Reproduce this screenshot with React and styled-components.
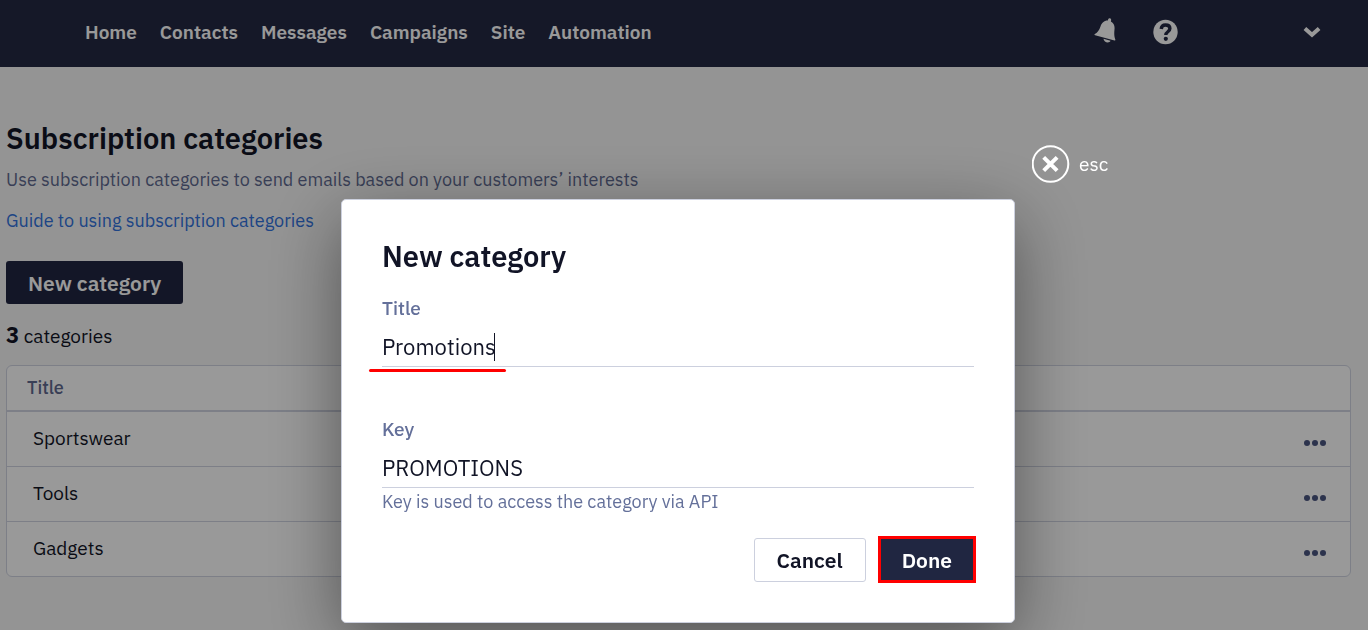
import React, { useState } from "react";
import styled, { createGlobalStyle, css } from "styled-components";

const rows = ["Sportswear", "Tools", "Gadgets"];
const links = ["Home", "Contacts", "Messages", "Campaigns", "Site", "Automation"];

export default function App() {
  const [title, setTitle] = useState("Promotions");
  const [key, setKey] = useState("PROMOTIONS");

  return (
    <>
      <GlobalStyle />
      <Header>
        <Nav>
          {links.map((link) => (
            <a href="#" key={link}>
              {link}
            </a>
          ))}
        </Nav>
        <Tools>
          <IconButton aria-label="Notifications">
            <svg width="26" height="28" viewBox="0 0 26 28" fill="currentColor">
              <path d="M15.200 1.200c.4-1.400 3.200-1.200 3 .9l-.3 1.300c3 1.600 4 4.400 3.600 7.900-.4 4.300-.4 7.100.8 10.200.3.800-.1 1.100-.8.900L2.100 17.200c-.8-.2-.9-.9-.2-1.300 2.800-1.600 4.300-4 5.600-7.500C8.800 5 11 2.500 14.800 2.600z" />
              <path d="M10.500 20.800l7 1.900c-.8 2.700-6.600 2.300-7-1.900z" />
            </svg>
          </IconButton>
          <IconButton aria-label="Help">
            <svg width="26" height="26" viewBox="0 0 26 26">
              <circle cx="12.500" cy="13" r="12.200" fill="currentColor" />
              <path
                d="M8.200 10c.2-2.700 1.900-4 4.300-4 2.700 0 4.400 1.300 4.400 3.600 0 3.300-4.100 3-4.100 6.400"
                fill="none"
                stroke="#232843"
                strokeWidth="3.400"
              />
              <circle cx="12.800" cy="19.800" r="2.100" fill="#232843" />
            </svg>
          </IconButton>
          <IconButton aria-label="Account" $account>
            <svg width="18" height="12" viewBox="0 0 18 12" fill="none" stroke="currentColor" strokeWidth="4">
              <path d="M1.900 2.400L9 8.800l7.100-6.400" />
            </svg>
          </IconButton>
        </Tools>
      </Header>

      <Main>
        <PageTitle>Subscription categories</PageTitle>
        <Intro>Use subscription categories to send emails based on your customers’ interests</Intro>
        <GuideLink href="#">Guide to using subscription categories</GuideLink>
        <Button $primary>New category</Button>
        <Count>
          <b>3</b> categories
        </Count>
        <TableCard>
          <Table>
            <thead>
              <tr>
                <th scope="col">Title</th>
                <td />
              </tr>
            </thead>
            <tbody>
              {rows.map((row) => (
                <tr key={row}>
                  <td>{row}</td>
                  <td>
                    <MoreButton aria-label={`Actions for ${row}`}>
                      <svg width="22" height="6" viewBox="0 0 22 6" fill="currentColor">
                        <circle cx="3" cy="3" r="3" />
                        <circle cx="11" cy="3" r="3" />
                        <circle cx="19" cy="3" r="3" />
                      </svg>
                    </MoreButton>
                  </td>
                </tr>
              ))}
            </tbody>
          </Table>
        </TableCard>
      </Main>

      <Overlay>
        <Dialog role="dialog" aria-modal="true" aria-labelledby="dialog-title">
          <CloseButton>
            <svg width="38" height="38" viewBox="0 0 38 38" fill="none" stroke="currentColor">
              <circle cx="18.500" cy="19" r="17.800" strokeWidth="2" />
              <path d="M11.700 12.300l13.400 13.400M25.100 12.300L11.700 25.700" strokeWidth="4" />
            </svg>
            esc
          </CloseButton>
          <DialogTitle id="dialog-title">New category</DialogTitle>
          <Field>
            <label htmlFor="title">Title</label>
            <InputWrap $marked>
              <input id="title" value={title} onChange={(e) => setTitle(e.target.value)} />
            </InputWrap>
          </Field>
          <Field>
            <label htmlFor="key">Key</label>
            <InputWrap>
              <input
                id="key"
                value={key}
                onChange={(e) => setKey(e.target.value)}
                aria-describedby="key-hint"
              />
            </InputWrap>
            <Hint id="key-hint">Key is used to access the category via API</Hint>
          </Field>
          <Actions>
            <Button>Cancel</Button>
            <Button $primary $marked>
              Done
            </Button>
          </Actions>
        </Dialog>
      </Overlay>
    </>
  );
}

const GlobalStyle = createGlobalStyle`
  * {
    box-sizing: border-box;
  }
  body {
    margin: 0;
    background-color: #f7f7f7;
    color: #111426;
    font-family: "IBM Plex Sans", Roboto, "Liberation Sans", sans-serif;
    font-size: 18px;
    line-height: 24px;
  }
  button,
  input {
    font: inherit;
    color: inherit;
  }
  a {
    text-decoration: none;
  }
`;

const Header = styled.header`
  display: flex;
  align-items: center;
  justify-content: space-between;
  height: 67px;
  padding: 0 47px 4px 85px;
  background-color: #232843;
  color: #ffffff;
`;

const Nav = styled.nav`
  display: flex;
  gap: 23px;
  a {
    color: inherit;
    font-size: 19px;
    font-weight: 600;
  }
`;

const Tools = styled.div`
  display: flex;
  align-items: center;
  gap: 34px;
`;

const IconButton = styled.button`
  display: flex;
  padding: 0;
  border: 0;
  background: none;
  ${({ $account }) =>
    $account &&
    css`
      margin-left: 90px;
    `}
`;

const Main = styled.main`
  display: flex;
  flex-direction: column;
  align-items: flex-start;
  padding: 53px 17px 24px 6px;
`;

const PageTitle = styled.h1`
  margin: 0;
  font-size: 29px;
  font-weight: 600;
  line-height: 36px;
`;

const Intro = styled.p`
  margin: 12px 0 17px;
  color: #5f6a90;
`;

const GuideLink = styled.a`
  margin-bottom: 28px;
  color: #3273de;
`;

const Button = styled.button`
  height: 44px;
  padding: 0 22px;
  border: 1px solid #ccd0de;
  border-radius: 3px;
  background-color: #ffffff;
  font-size: 21px;
  font-weight: 600;
  ${({ $primary }) =>
    $primary &&
    css`
      height: 43px;
      border: 0;
      background-color: #202641;
      color: #ffffff;
    `}
  ${({ $marked }) =>
    $marked &&
    css`
      border-radius: 0;
      outline: 3px solid #ff0000;
      outline-offset: -1px;
    `}
`;

const Count = styled.p`
  margin: 19px 0 17px;
  font-size: 19px;
  b {
    font-size: 22px;
  }
`;

const TableCard = styled.div`
  align-self: stretch;
  overflow: hidden;
  border: 1px solid #d0d4e2;
  border-radius: 6px;
  background-color: #ffffff;
`;

const Table = styled.table`
  width: 100%;
  border-collapse: collapse;
  font-size: 19px;
  th,
  td {
    padding: 0 26px 2px;
    text-align: left;
  }
  td:last-child {
    padding: 0 24px;
    text-align: right;
  }
  thead tr {
    height: 45px;
  }
  th {
    padding: 0 20px;
    color: #5f6a90;
    font-size: 18px;
    font-weight: 500;
  }
  tbody tr {
    height: 55px;
    border-top: 1px solid #d0d4e2;
  }
  tbody tr:first-child {
    border-top-width: 2px;
  }
`;

const MoreButton = styled.button`
  padding: 0;
  border: 0;
  background: none;
  color: #4a5680;
  svg {
    display: block;
  }
`;

const Overlay = styled.div`
  position: fixed;
  inset: 0;
  display: flex;
  align-items: flex-start;
  justify-content: center;
  padding: 199px 12px 0 0;
  background-color: rgba(0, 0, 0, 0.4);
`;

const Dialog = styled.div`
  position: relative;
  width: 100%;
  max-width: 674px;
  padding: 38px 40px 40px;
  border: 1px solid #ccd0de;
  border-radius: 5px;
  background-color: #ffffff;
  box-shadow: 0 20px 72px rgba(0, 0, 0, 0.45);
`;

const CloseButton = styled.button`
  position: absolute;
  left: 100%;
  bottom: 100%;
  display: flex;
  align-items: center;
  gap: 9px;
  margin: 0 0 17px 18px;
  padding: 0;
  border: 0;
  background: none;
  color: #ffffff;
  font-size: 19px;
`;

const DialogTitle = styled.h2`
  margin: 0 0 22px;
  font-size: 29px;
  font-weight: 600;
  line-height: 36px;
`;

const Field = styled.div`
  display: flex;
  flex-direction: column;
  gap: 9px;
  margin-bottom: 50px;
  label {
    color: #64709a;
    font-size: 19px;
    font-weight: 500;
  }
  & + & {
    margin-bottom: 24px;
  }
`;

const InputWrap = styled.div`
  position: relative;
  input {
    display: block;
    width: 100%;
    height: 38px;
    padding: 0 0 2px;
    border: 0;
    border-bottom: 1px solid #ccd0de;
    outline: 0;
    background: none;
    font-size: 22px;
  }
  ${({ $marked }) =>
    $marked &&
    css`
      &::before {
        content: "";
        position: absolute;
        top: 4px;
        left: 112px;
        width: 1px;
        height: 28px;
        background-color: #111426;
      }
      &::after {
        content: "";
        position: absolute;
        top: 40px;
        left: -13px;
        width: 137px;
        height: 3px;
        border-radius: 2px;
        background-color: #ff0000;
      }
    `}
`;

const Hint = styled.span`
  margin-top: -7px;
  color: #64709a;
`;

const Actions = styled.div`
  display: flex;
  justify-content: flex-end;
  gap: 14px;
`;
